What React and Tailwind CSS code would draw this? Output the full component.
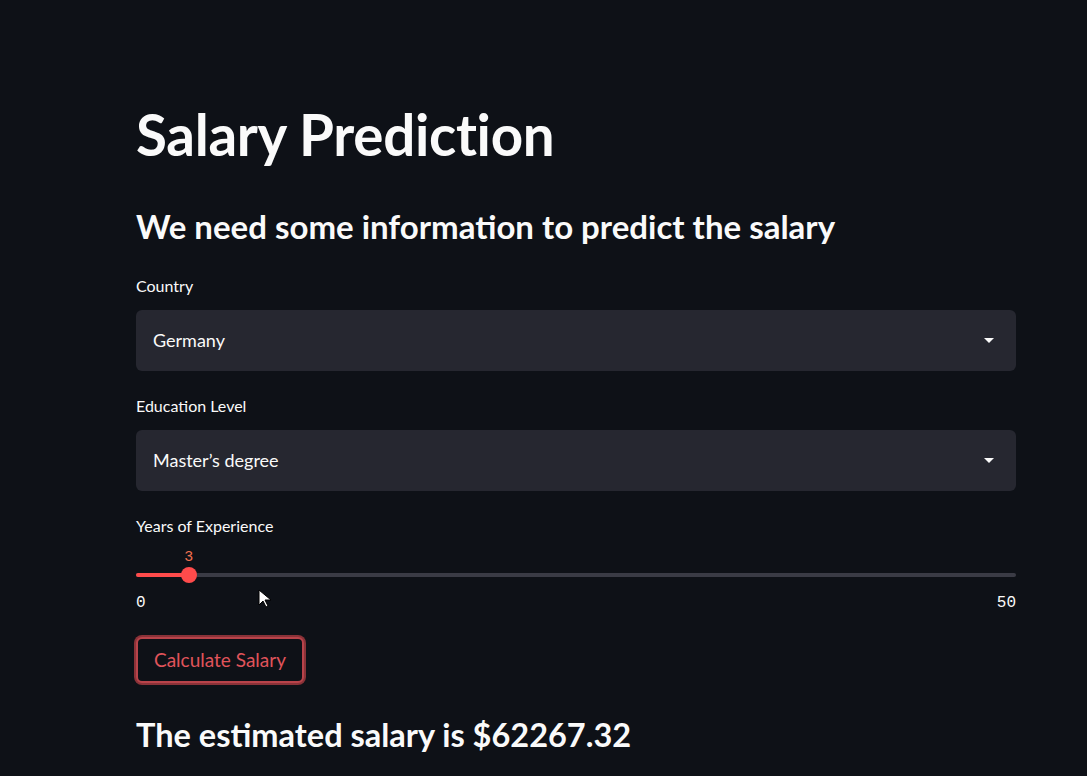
import { useState } from 'react';

function SelectBox({ label, value }) {
  return (
    <div className="flex flex-col">
      <label className="text-[16px] leading-[20px] text-[#fafafa] mb-[14px]">{label}</label>
      <div className="h-[61px] rounded-[6px] bg-[#262730] flex items-center justify-between pl-[17px] pr-[20px]">
        <span className="text-[18px] text-[#fafafa]">{value}</span>
        <svg width="12" height="7" viewBox="0 0 12 7" className="mr-[1px]">
          <path d="M1 1h10L6 6z" fill="#fafafa" />
        </svg>
      </div>
    </div>
  );
}

function Cursor() {
  return (
    <svg width="14" height="20" viewBox="0 0 14 20" className="absolute left-[258px] top-[589px]">
      <path d="M1 1v15l4-4 3 6 2-1-3-6h6z" fill="#ffffff" stroke="#000000" strokeWidth="1" />
    </svg>
  );
}

export default function App() {
  const [years] = useState(3);
  const pct = (years / 50) * 100;

  return (
    <div className="relative min-h-[776px] bg-[#0e1117] font-['Lato',sans-serif] text-[#fafafa]">
      <div className="w-[880px] ml-[136px] pt-[104px] flex flex-col">
        <h1 className="text-[56.5px] leading-[60px] font-bold tracking-[-0.3px]">Salary Prediction</h1>
        <h3 className="mt-[42px] text-[33px] leading-[40px] font-bold">We need some information to predict the salary</h3>

        <div className="mt-[30px] flex flex-col gap-[25px]">
          <SelectBox label="Country" value="Germany" />
          <SelectBox label="Education Level" value="Master’s degree" />
        </div>

        <div className="mt-[25px] flex flex-col">
          <label className="text-[16px] leading-[20px]">Years of Experience</label>
          <div className="relative h-[57px]">
            <div className="absolute top-[37px] left-0 right-0 h-[4px] rounded-full bg-[#3a3b45]" />
            <div className="absolute top-[37px] left-0 h-[4px] rounded-full bg-[#ff4b4b]" style={{ width: `${pct}%` }} />
            <div
              className="absolute top-[31px] w-[16px] h-[16px] -ml-[8px] rounded-full bg-[#ff4b4b]"
              style={{ left: `${pct}%` }}
            />
            <div
              className="absolute top-[12px] -ml-[10px] w-[20px] leading-[20px] text-center font-['Liberation_Mono',monospace] text-[15px] text-[#f0704f]"
              style={{ left: `${pct}%` }}
            >
              {years}
            </div>
          </div>
          <div className="flex justify-between font-['Liberation_Mono',monospace] text-[16px] leading-[20px]">
            <span>0</span>
            <span>50</span>
          </div>
        </div>

        <div className="mt-[24px]">
          <button className="h-[46px] w-[168px] rounded-[6px] border-2 border-[#b8434a] ring-2 ring-[#8a3238] bg-[#0e1117] text-[19px] text-[#e0545b]">
            Calculate Salary
          </button>
        </div>

        <h3 className="mt-[32px] text-[32.5px] leading-[40px] font-bold">The estimated salary is $62267.32</h3>
      </div>
      <Cursor />
    </div>
  );
}
